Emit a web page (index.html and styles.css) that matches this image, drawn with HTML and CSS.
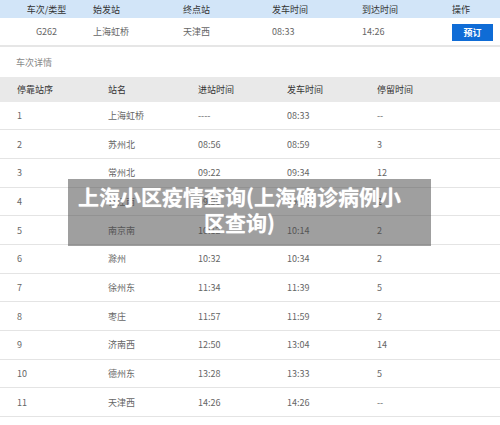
FILE: index.html
```html
<!DOCTYPE html>
<html lang="zh-CN">
<head>
<meta charset="utf-8">
<link rel="stylesheet" href="styles.css">
</head>
<body>
<div class="page">
  <div class="summary">
    <div class="sum-row sum-head">
      <div class="c-first">车次/类型</div>
      <div>始发站</div>
      <div>终点站</div>
      <div>发车时间</div>
      <div>到达时间</div>
      <div>操作</div>
    </div>
    <div class="sum-row sum-body">
      <div class="c-first">G262</div>
      <div>上海虹桥</div>
      <div>天津西</div>
      <div>08:33</div>
      <div>14:26</div>
      <div><button class="btn">预订</button></div>
    </div>
  </div>

  <div class="section-title">车次详情</div>

  <div class="stops">
    <div class="stop-row stop-head">
      <div>停靠站序</div><div>站名</div><div>进站时间</div><div>发车时间</div><div>停留时间</div>
    </div>
    <div class="stop-row"><div>1</div><div>上海虹桥</div><div>----</div><div>08:33</div><div>--</div></div>
    <div class="stop-row"><div>2</div><div>苏州北</div><div>08:56</div><div>08:59</div><div>3</div></div>
    <div class="stop-row"><div>3</div><div>常州北</div><div>09:22</div><div>09:34</div><div>12</div></div>
    <div class="stop-row"><div>4</div><div>镇江南</div><div>09:50</div><div>09:52</div><div>2</div></div>
    <div class="stop-row"><div>5</div><div>南京南</div><div>10:12</div><div>10:14</div><div>2</div></div>
    <div class="stop-row"><div>6</div><div>滁州</div><div>10:32</div><div>10:34</div><div>2</div></div>
    <div class="stop-row"><div>7</div><div>徐州东</div><div>11:34</div><div>11:39</div><div>5</div></div>
    <div class="stop-row"><div>8</div><div>枣庄</div><div>11:57</div><div>11:59</div><div>2</div></div>
    <div class="stop-row"><div>9</div><div>济南西</div><div>12:50</div><div>13:04</div><div>14</div></div>
    <div class="stop-row"><div>10</div><div>德州东</div><div>13:28</div><div>13:33</div><div>5</div></div>
    <div class="stop-row"><div>11</div><div>天津西</div><div>14:26</div><div>14:26</div><div>--</div></div>
  </div>

  <div class="overlay">上海小区疫情查询(上海确诊病例小区查询)</div>
</div>
</body>
</html>
```

FILE: styles.css
```css
html, body {
  margin: 0;
  padding: 0;
  background: #ffffff;
}

.page {
  position: relative;
  width: 500px;
  height: 425px;
  overflow: hidden;
  font-family: "Noto Sans CJK SC", "Noto Sans", sans-serif;
  font-size: 9px;
  color: #666666;
}

.sum-row {
  display: grid;
  grid-template-columns: 93px 90px 89px 90px 90px 1fr;
  align-items: center;
}

.sum-row .c-first {
  text-align: center;
}

.sum-head {
  height: 18px;
  background: #d2e5f8;
  color: #333333;
}

.sum-body {
  height: 29px;
  box-sizing: border-box;
  border-bottom: 2px solid #e6e6e6;
  color: #666666;
}

.btn {
  display: block;
  width: 41px;
  height: 17px;
  margin-top: 1px;
  padding: 0;
  border: none;
  background: #0f6cd6;
  color: #ffffff;
  font-family: inherit;
  font-size: 9px;
  font-weight: bold;
}

.section-title {
  height: 30px;
  padding-left: 16px;
  display: flex;
  align-items: center;
  color: #888888;
}

.stop-row {
  display: grid;
  grid-template-columns: 91px 90px 89px 90px 1fr;
  align-items: center;
  padding-left: 17px;
  height: 28.7px;
  box-sizing: border-box;
  border-bottom: 1px solid #e4e4e4;
}

.stop-head {
  height: 24.5px;
  background: #e9e9e9;
  border-bottom: none;
  color: #333333;
}

.overlay {
  position: absolute;
  left: 68px;
  top: 179px;
  width: 363px;
  height: 67px;
  box-sizing: border-box;
  padding: 4px 25px 0 5px;
  background: rgba(70, 70, 70, 0.52);
  color: #ffffff;
  font-size: 21px;
  font-weight: bold;
  line-height: 26px;
  text-align: center;
  text-shadow: 0 0 1px rgba(255, 255, 255, 0.6);
}
```
